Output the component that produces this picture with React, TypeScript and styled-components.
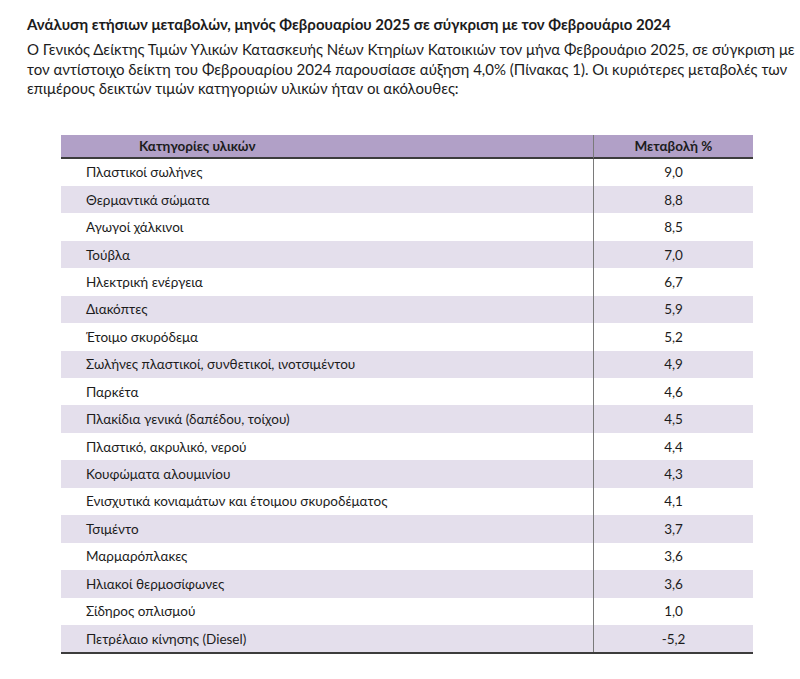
import styled, { createGlobalStyle } from "styled-components";

const rows: [string, string][] = [
  ["Πλαστικοί σωλήνες", "9,0"],
  ["Θερμαντικά σώματα", "8,8"],
  ["Αγωγοί χάλκινοι", "8,5"],
  ["Τούβλα", "7,0"],
  ["Ηλεκτρική ενέργεια", "6,7"],
  ["Διακόπτες", "5,9"],
  ["Έτοιμο σκυρόδεμα", "5,2"],
  ["Σωλήνες πλαστικοί, συνθετικοί, ινοτσιμέντου", "4,9"],
  ["Παρκέτα", "4,6"],
  ["Πλακίδια γενικά (δαπέδου, τοίχου)", "4,5"],
  ["Πλαστικό, ακρυλικό, νερού", "4,4"],
  ["Κουφώματα αλουμινίου", "4,3"],
  ["Ενισχυτικά κονιαμάτων και έτοιμου σκυροδέματος", "4,1"],
  ["Τσιμέντο", "3,7"],
  ["Μαρμαρόπλακες", "3,6"],
  ["Ηλιακοί θερμοσίφωνες", "3,6"],
  ["Σίδηρος οπλισμού", "1,0"],
  ["Πετρέλαιο κίνησης (Diesel)", "-5,2"],
];

const Global = createGlobalStyle`
  body {
    margin: 0;
    background: #fff;
    font-family: Lato, "Open Sans", sans-serif;
    color: #1c1c1c;
  }
`;

const Page = styled.div`
  width: 800px;
  height: 679px;
  padding: 14px 0 0 27px;
  box-sizing: border-box;
`;

const Title = styled.h1`
  margin: 0;
  font-size: 15px;
  font-weight: 700;
  line-height: 20px;
`;

const Para = styled.p`
  margin: 6px 0 0;
  font-size: 15px;
  line-height: 19.5px;
  width: 770px;
`;

const Table = styled.div`
  margin: 36px 0 0 34px;
  width: 692px;
  display: grid;
  grid-template-columns: 532px 160px;
  font-size: 13.5px;
  border-bottom: 2px solid #3c3c3c;
`;

const Head = styled.div<{ $left?: boolean }>`
  height: 22px;
  background: #b1a0c7;
  border-bottom: 2px solid #3c3c3c;
  font-weight: 700;
  display: flex;
  align-items: center;
  justify-content: ${(p) => (p.$left ? "flex-start" : "center")};
  padding-left: ${(p) => (p.$left ? "78px" : "0")};
  border-left: ${(p) => (p.$left ? "none" : "1px solid #7a7a7a")};
`;

const Cell = styled.div<{ $shade: boolean; $num?: boolean }>`
  height: 27.45px;
  background: ${(p) => (p.$shade ? "#e4dfec" : "#fff")};
  display: flex;
  align-items: center;
  justify-content: ${(p) => (p.$num ? "center" : "flex-start")};
  padding-left: ${(p) => (p.$num ? "0" : "25px")};
  border-left: ${(p) => (p.$num ? "1px solid #7a7a7a" : "none")};
`;

export default function App() {
  return (
    <Page>
      <Global />
      <Title>
        Ανάλυση ετήσιων μεταβολών, μηνός Φεβρουαρίου 2025 σε σύγκριση με τον
        Φεβρουάριο 2024
      </Title>
      <Para>
        Ο Γενικός Δείκτης Τιμών Υλικών Κατασκευής Νέων Κτηρίων Κατοικιών τον
        μήνα Φεβρουάριο 2025, σε σύγκριση με τον αντίστοιχο δείκτη του
        Φεβρουαρίου 2024 παρουσίασε αύξηση 4,0% (Πίνακας 1). Οι κυριότερες
        μεταβολές των επιμέρους δεικτών τιμών κατηγοριών υλικών ήταν οι
        ακόλουθες:
      </Para>
      <Table>
        <Head $left>Κατηγορίες υλικών</Head>
        <Head>Μεταβολή %</Head>
        {rows.map(([name, value], i) => (
          <>
            <Cell key={name} $shade={i % 2 === 1}>
              {name}
            </Cell>
            <Cell key={name + "v"} $shade={i % 2 === 1} $num>
              {value}
            </Cell>
          </>
        ))}
      </Table>
    </Page>
  );
}
